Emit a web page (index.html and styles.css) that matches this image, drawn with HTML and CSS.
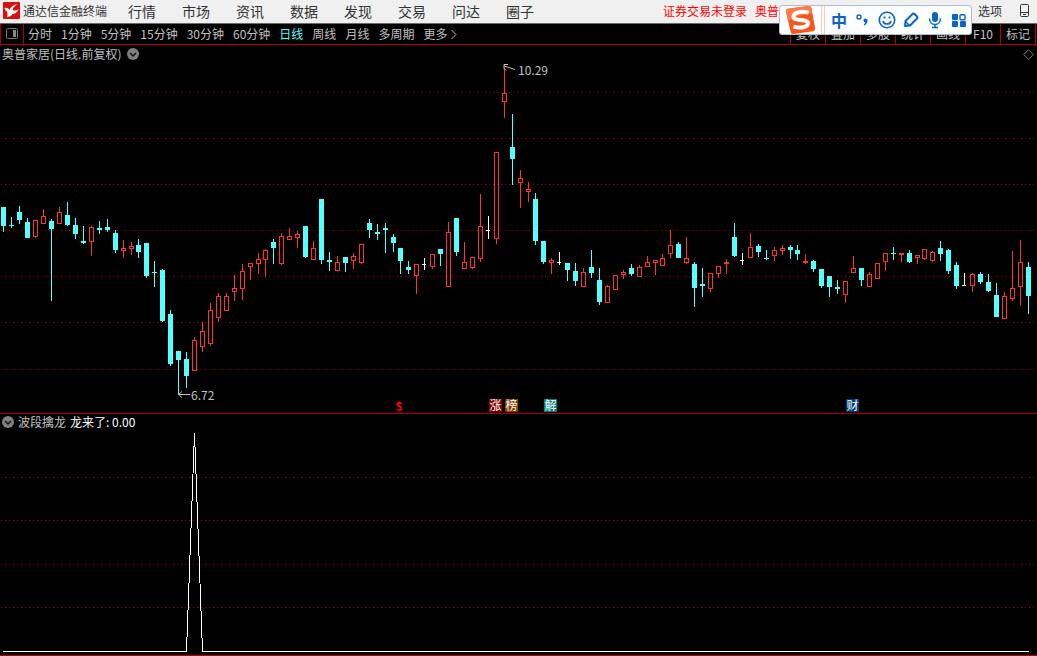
FILE: index.html
```html
<!DOCTYPE html>
<html lang="zh-CN">
<head>
<meta charset="utf-8">
<title>通达信金融终端</title>
<link rel="stylesheet" href="styles.css">
</head>
<body>
<header class="topbar">
  <svg class="logo" viewBox="0 0 17 17" aria-hidden="true">
    <rect width="17" height="17" rx="1" fill="#d9100f"/>
    <path d="M1.500 6C4 5.500 5.500 6.500 6.500 8C7.500 5 10 3 14.500 2C12 3.500 10 5.500 9.500 8C12 9 14 8.500 15.500 7C14.500 11 11 12 9.500 12C8.500 14 6.500 15 4 15C5 13 4.500 10.500 4 9.500C3 9 2 8 1.500 6Z" fill="#fff"/>
  </svg>
  <h1 class="brand">通达信金融终端</h1>
  <nav class="menu">
    <a href="#">行情</a><a href="#">市场</a><a href="#">资讯</a><a href="#">数据</a><a href="#">发现</a><a href="#">交易</a><a href="#">问达</a><a href="#">圈子</a>
  </nav>
  <div class="status"><span>证券交易未登录</span><span>奥普家居</span></div>
  <div class="tools">
    <button type="button" class="plain">选项</button>
    <button type="button" class="plain" aria-label="手机版">
      <svg width="10" height="15" viewBox="0 0 10 15" fill="none" stroke="#333"><rect x=".5" y="1.500" width="8" height="12" rx="1"/><path d="M1 9.500h8M3 11.500h3"/></svg>
    </button>
  </div>
</header>

<div class="toolbar">
  <button type="button" class="side" aria-label="侧栏">
    <svg width="13" height="12" viewBox="0 0 13 12"><rect x=".5" y=".5" width="11" height="10" rx="1" fill="none" stroke="#777"/><rect x="7" y="2" width="3" height="7" fill="#888"/></svg>
  </button>
  <nav class="periods">
    <button type="button">分时</button><button type="button">1分钟</button><button type="button">5分钟</button><button type="button">15分钟</button><button type="button">30分钟</button><button type="button">60分钟</button><button type="button" class="active">日线</button><button type="button">周线</button><button type="button">月线</button><button type="button">多周期</button><button type="button" class="more">更多<svg width="6" height="11" viewBox="0 0 6 11"><path d="M.5 1l4.500 4.500L.5 10" fill="none" stroke="#c0c0c0"/></svg></button>
  </nav>
  <div class="actions">
    <button type="button">复权</button><button type="button">叠加</button><button type="button">多股</button><button type="button">统计</button><button type="button">画线</button><button type="button">F10</button><button type="button">标记</button>
  </div>
</div>

<main class="charts">
  <section class="panel panel-main">
    <div class="panel-title">
      <span>奥普家居(日线.前复权)</span>
      <button type="button" class="plain" aria-label="展开"><svg width="12" height="12" viewBox="0 0 12 12"><circle cx="6" cy="6" r="6" fill="#808080"/><path d="M3 5l3 3 3-3" fill="none" stroke="#111" stroke-width="1.500"/></svg></button>
      <svg class="diamond" width="11" height="11" viewBox="0 0 11 11"><path d="M5.500 .7l4.800 4.800-4.800 4.800L.7 5.500z" fill="none" stroke="#808080"/></svg>
    </div>
    <div class="plot"><svg id="kline" role="img" aria-label="日线图"></svg></div>
  </section>
  <section class="panel panel-sub">
    <div class="panel-title">
      <button type="button" class="plain" aria-label="指标"><svg width="12" height="12" viewBox="0 0 12 12"><circle cx="6" cy="6" r="6" fill="#808080"/><path d="M3 5l3 3 3-3" fill="none" stroke="#111" stroke-width="1.500"/></svg></button>
      <span>波段擒龙</span>
      <span class="value">龙来了: 0.00</span>
    </div>
    <div class="plot"><svg id="indicator" role="img" aria-label="波段擒龙"></svg></div>
  </section>
</main>

<div class="ime">
  <svg class="sogou" viewBox="0 0 34 30" aria-hidden="true">
    <path d="M1 5Q1 3 3 3L25 0Q27 0 28 2L32 24Q32 26 30 27L9 30Q7 30 6 28Z" fill="#f4581f"/>
    <path d="M1 5Q1 3 3 3L25 0Q27 0 28 2L29 8Q15 9 3 16Z" fill="#fb7a48"/>
    <path d="M25 7C16 5 9 7 9 11.500C9 17 24.500 13 24.500 18.500C24.500 23 16 24 9 22" fill="none" stroke="#fff" stroke-width="4.200"/>
  </svg>
  <span class="ime-divider"></span>
  <button type="button" class="ime-lang">中</button>
  <button type="button" aria-label="标点"><svg width="18" height="18" viewBox="0 0 18 18"><circle cx="5" cy="6" r="2" fill="none" stroke="#0b63c4" stroke-width="1.400"/><path d="M9.500 9.500a2 2 0 1 1 3.800 1c-.3 2-1.300 3.200-3 4l-.6-1c1-.6 1.400-1.200 1.500-2a2 2 0 0 1-1.700-2z" fill="#0b63c4"/></svg></button>
  <button type="button" aria-label="表情"><svg width="18" height="18" viewBox="0 0 18 18" fill="none" stroke="#0b63c4" stroke-width="1.600"><circle cx="9" cy="9" r="7.700"/><path d="M5 10c.8 4 7.200 4 8 0"/><path d="M6.500 5.500v2M11.500 5.500v2" stroke-width="1.800"/></svg></button>
  <button type="button" aria-label="手写"><svg width="18" height="18" viewBox="0 0 18 18" fill="none" stroke="#0b63c4" stroke-width="2" stroke-linejoin="round"><path d="M3 15l.5-5 7-7q1-1 2 0l2.500 2.500q1 1 0 2l-7 7z"/><path d="M3.500 10.500l4 4" stroke-width="1.400"/></svg></button>
  <button type="button" aria-label="语音"><svg width="18" height="18" viewBox="0 0 18 18"><rect x="6" y="1" width="6" height="10" rx="3" fill="#0b63c4"/><path d="M3.500 7.500c0 8 11 8 11 0M9 13v4M6 16.500h6" fill="none" stroke="#0b63c4" stroke-width="1.500"/></svg></button>
  <button type="button" aria-label="工具箱"><svg width="18" height="18" viewBox="0 0 18 18" fill="#0b63c4"><rect x="2" y="3" width="6" height="6" rx="1"/><rect x="10" y="3.700" width="5" height="5" rx="1" fill="none" stroke="#0b63c4" stroke-width="1.400"/><rect x="2" y="10" width="6" height="6" rx="1"/><rect x="10" y="10" width="6" height="6" rx="1"/></svg></button>
</div>
<script src="chart.js"></script>
</body>
</html>
```

FILE: styles.css
```css
* { box-sizing: border-box; }

body {
  margin: 0;
  min-height: 100vh;
  display: flex;
  flex-direction: column;
  position: relative;
  background: #000;
  color: #c0c0c0;
  font: 12px/16px "Noto Sans CJK SC", sans-serif;
}

button {
  margin: 0;
  padding: 0;
  border: 0;
  background: none;
  color: inherit;
  font: inherit;
  white-space: nowrap;
}

a { color: inherit; text-decoration: none; }
svg { display: block; }

.topbar {
  height: 24px;
  display: flex;
  align-items: center;
  padding: 0 7px 2px 3px;
  background: #f0f0f0;
  border-bottom: 1px solid #6a6a6a;
  color: #333;
  white-space: nowrap;
}
.logo { width: 17px; height: 17px; flex: none; }
.brand { margin: 0 0 0 3px; font-size: 12px; font-weight: 400; }
.menu { display: flex; gap: 26px; margin-left: 21px; font-size: 14px; }
.status { display: flex; gap: 8px; margin-left: auto; color: #f00; }
.tools { display: flex; align-items: center; gap: 18px; margin-left: 175px; }

.toolbar {
  height: 21px;
  display: flex;
  padding-right: 1px;
  border-bottom: 1px solid #b00000;
  border-left: 1px solid #b00000;
}
.side {
  width: 23px;
  display: flex;
  align-items: center;
  justify-content: center;
  border-right: 1px solid #b00000;
}
.periods { display: flex; gap: 9px; margin-left: 4px; }
.periods .active { color: #54ffff; }
.more { display: flex; align-items: center; gap: 4px; }
.actions { display: flex; margin-left: auto; border-right: 1px solid #b00000; }
.actions button { width: 35px; border-left: 1px solid #b00000; }

.charts { flex: 1; display: flex; flex-direction: column; }
.panel { display: flex; flex-direction: column; border-bottom: 1px solid #b00000; }
.panel-main { flex: 369 1 0; }
.panel-sub { flex: 242 1 0; }
.panel-title { height: 17px; display: flex; align-items: center; gap: 4px; padding: 0 3px 0 2px; }
.panel-main .panel-title { gap: 6px; padding-top: 1px; }
.value { color: #fff; }
.diamond { margin-left: auto; }
.plot { flex: 1; min-height: 0; overflow: hidden; }
.plot svg { width: 100%; height: 100%; }

.grid { stroke: #b00000; stroke-dasharray: 1 3; }
.up { fill: none; stroke: #ff3232; }
.down { fill: #54ffff; }
.flat { fill: #fff; }
.wick-up { fill: #ff3232; }
.label { fill: #c0c0c0; font-size: 12px; }
.arrow { fill: none; stroke: #c0c0c0; }
.badge-text { fill: #fff; font-size: 12px; text-anchor: middle; }
.rise { fill: #800000; }
.rank { fill: #804000; }
.unlock { fill: #008080; }
.finance { fill: #003c78; }
.split { fill: #f00; font-size: 11px; font-weight: 700; text-anchor: middle; }
.signal { fill: none; stroke: #fff; }

.ime {
  position: absolute;
  top: 5px;
  right: 65px;
  height: 30px;
  display: flex;
  align-items: center;
  padding: 0 0 0 5px;
  background: #fbfdff;
  border: 1px solid #b4c0cf;
  border-radius: 3px;
}
.sogou { width: 32px; height: 30px; }
.ime-divider { width: 4px; height: 28px; margin: 0 2px 0 4px; border: solid #fbcdb8; border-width: 0 1px; }
.ime button { width: 24px; height: 24px; display: flex; align-items: center; justify-content: center; }
.ime .ime-lang { color: #0b63c4; font-size: 16px; font-weight: 700; }
```

FILE: chart.js
```js
// Each candle: kind (r rising, c falling, w unchanged), high, low, body top, body bottom.
const candles = `
c207,232,207,226 c217,228,225,226 c206,224,212,220 c218,238,222,238 r220,238,220,237 r209,224,216,224
c219,301,221,229 r207,224,212,224 c202,226,215,225 c218,239,225,234 c226,244,241,243 r226,256,227,242
c221,234,228,230 c219,232,227,230 c230,253,233,250 r240,258,248,251 r242,255,246,249 c239,258,245,252
c243,278,243,276 c261,287,272,273 c269,322,270,321 c310,366,314,364 c351,394,351,360 c352,388,359,376
r337,371,340,371 r322,352,331,347 r303,346,310,344 r293,322,296,318 r293,311,296,311 r275,301,288,292
r264,300,271,289 r263,280,263,267 r253,274,259,264 r249,277,250,260 c239,264,242,248 r233,265,236,264
r228,240,236,240 r231,248,234,238 c226,258,226,257 r241,260,248,260 c199,264,199,260 c252,271,260,262
r256,271,262,271 c257,272,257,263 r253,269,256,261 r244,264,244,263 c219,238,223,230 c224,240,232,234
c223,253,228,230 c234,252,237,243 c248,274,248,261 c261,274,267,270 r264,294,264,276 w258,270,264,265
r254,269,254,267 c249,266,249,254 r222,287,232,287 c218,256,218,252 r242,269,262,269 r257,269,257,268
r194,262,226,259 w216,239,230,231 r152,244,152,239 r68,118,93,102 c114,185,147,159 r170,208,178,183
r182,202,189,192 c193,245,199,241 c241,264,241,262 r258,274,260,263 w252,265,262,263 c263,281,263,270
c263,286,271,281 r268,287,272,287 c250,278,267,273 c268,305,280,302 r285,303,286,303 r275,290,275,290
r270,279,272,275 c264,276,268,274 r265,277,267,277 r256,267,262,267 r260,275,260,263 r254,266,258,266
r230,258,245,254 c242,258,244,258 r237,264,258,263 c262,307,264,288 c268,297,284,286 r273,292,273,289
r266,278,266,274 r259,274,262,264 c223,257,237,256 w253,265,260,261 r233,258,247,258 c244,257,246,252
c250,260,258,259 r247,261,250,256 r245,255,248,251 c245,259,247,250 c245,260,250,254 r254,264,261,263
c260,272,261,269 c269,288,269,286 c276,297,276,287 c280,294,287,289 r281,303,281,295 r256,273,268,273
c268,286,268,280 r272,287,274,287 r263,279,263,279 r253,271,253,262 c247,260,253,254 r253,262,253,255
c250,263,253,262 r255,264,255,258 r249,260,249,259 r251,262,252,261 c241,261,248,254 c249,274,250,271
c262,289,265,286 w273,286,285,286 r273,292,274,286 c272,284,274,282 c274,292,282,291 c283,317,295,317
r292,319,296,319 r251,301,288,299 r240,306,262,287 c262,314,267,296`
  .trim().split(/\s+/)
  .map(s => [s[0], ...s.slice(1).split(',').map(Number)]);

const rect = (cls, x, y, w, h) =>
  `<rect class="${cls}" x="${x}" y="${y}" width="${w}" height="${h}" shape-rendering="crispEdges"/>`;
const gridLine = (y, width) =>
  `<path class="grid" d="M1 ${y + 0.5}H${width}" shape-rendering="crispEdges"/>`;

function drawCandles() {
  const svg = document.getElementById('kline');
  const width = svg.clientWidth;
  const height = svg.clientHeight;
  const pitch = (width - 12.78) / (candles.length - 1);
  const X = i => Math.floor(3.99 + i * pitch);
  const Y = v => Math.round((v - 62) * height / 351);
  let out = [92, 138, 184, 230, 276, 322, 369].map(v => gridLine(Y(v), width)).join('');

  candles.forEach(([kind, high, low, top, bottom], i) => {
    const x = X(i);
    const [h, l, t, b] = [high, low, top, bottom].map(Y);
    if (kind === 'r') {
      if (t > h) out += rect('wick-up', x, h, 1, t - h);
      if (l > b) out += rect('wick-up', x, b, 1, l - b);
      out += rect('up', x - 1.5, t + 0.5, 4, Math.max(b - t - 1, 1));
    } else {
      const cls = kind === 'c' ? 'down' : 'flat';
      out += rect(cls, x, h, 1, l - h);
      out += rect(cls, x - 2, t, kind === 'c' ? 5 : 4, Math.max(b - t, 1));
    }
  });

  const lowX = X(22);
  const lowY = Y(394) + 0.5;
  out += `<path class="arrow" d="M${lowX} ${lowY}h12M${lowX + 4} ${lowY - 3}l-3.500 3 3.500 3"/>`;
  out += `<text class="label" x="${lowX + 13}" y="${lowY + 5.5}">6.72</text>`;
  const topX = X(63);
  const topY = Y(66);
  out += `<path class="arrow" d="M${topX} ${topY}l11 3.500M${topX + 4} ${topY - 1.5}h-4v4l2 2"/>`;
  out += `<text class="label" x="${topX + 14}" y="${topY + 9}">10.29</text>`;

  const bx = X(50) - 1;
  out += `<path fill="#f00" d="M${bx - 3} ${height - 9}l3-3 3 3z"/>`;
  out += `<text class="split" x="${bx}" y="${height - 2}">S</text>`;
  [[62, '涨', 'rise'], [64, '榜', 'rank'], [69, '解', 'unlock'], [107, '财', 'finance']].forEach(([i, text, cls]) => {
    out += rect(cls, X(i) - 7, height - 14, 13, 13);
    out += `<text class="badge-text" x="${X(i) - 0.5}" y="${height - 3}">${text}</text>`;
  });
  svg.innerHTML = out;
}

function drawIndicator() {
  const svg = document.getElementById('indicator');
  const width = svg.clientWidth;
  const height = svg.clientHeight;
  const pitch = (width - 12.78) / (candles.length - 1);
  const X = i => Math.floor(3.99 + i * pitch) + 0.5;
  const Y = v => Math.round((v - 431) * height / 224);
  const base = Y(651) + 0.5;
  svg.innerHTML = [477, 520, 564, 607].map(v => gridLine(Y(v), width)).join('') +
    `<path class="signal" shape-rendering="crispEdges" d="M3 ${base}H${X(23)}L${X(24)} ${Y(433)}L${X(25)} ${base}H${X(candles.length - 1)}"/>`;
}

function draw() {
  drawCandles();
  drawIndicator();
}

window.addEventListener('resize', draw);
draw();
```
